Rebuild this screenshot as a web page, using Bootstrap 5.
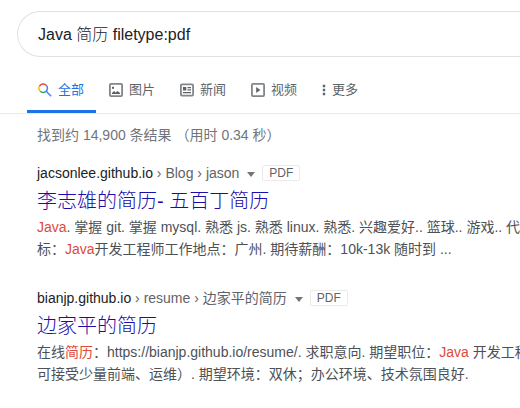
<!DOCTYPE html>
<html lang="zh-CN">
<head>
<meta charset="utf-8">
<meta name="viewport" content="width=device-width, initial-scale=1">
<title>Java 简历 filetype:pdf</title>
<link href="https://cdn.jsdelivr.net/npm/bootstrap@5.3.0/dist/css/bootstrap.min.css" rel="stylesheet">
<style>
body { font-family: "Liberation Sans", "Noto Sans CJK SC", sans-serif; font-size: 14px; line-height: 22px; color: #4d5156; background: #fff; }
.search-form { padding: 11px 0 0 17px; }
.search-box { height: 46px; padding: 0 20px 2px; border: 1px solid #dfe1e5; border-right: 0; border-radius: 24px 0 0 24px; font-size: 16px; font-weight: 300; color: #202124; }
.search-box:focus { box-shadow: none; border-color: #dfe1e5; color: #202124; }
.tab-bar { padding: 10px 0 0 27px; border-bottom: 1px solid #ebebeb; gap: 2px; }
.tab-link { height: 46px; padding: 2px 12px 0 11px; gap: 6px; font-size: 13px; color: #5f6368; border-bottom: 3px solid transparent; }
.tab-link.current { color: #1a73e8; border-color: #1a73e8; }
.tab-link svg { width: 14px; height: 14px; }
.tab-link .dots { width: 4px; }
.results { padding: 10px 0 0 37px; }
.stats { color: #70757a; margin-bottom: 16px; }
.result { margin-bottom: 27px; }
.source { color: #5f6368; }
.source .host { color: #202124; }
.result-menu { width: 8px; height: 5px; margin: 2px 7px 0 8px; color: #70757a; }
.file-type { padding: 0 6px; height: 16px; line-height: 14px; font-size: 12px; border: 1px solid #ebebeb; border-radius: 2px; color: #5f6368; }
.result-title { font-size: 20px; line-height: 30px; font-weight: 300; padding-top: 2px; }
.result-title a { color: #1a0dab; }
.snippet em { color: #dd4b39; }
</style>
<script src="https://cdn.jsdelivr.net/npm/bootstrap@5.3.0/dist/js/bootstrap.bundle.min.js"></script>
</head>
<body class="overflow-hidden">
<form class="search-form" role="search">
  <input class="form-control search-box" type="text" aria-label="搜索" value="Java 简历 filetype:pdf">
</form>
<nav class="tab-bar d-flex text-nowrap" aria-label="搜索类型">
  <a class="tab-link current d-flex align-items-center text-decoration-none" href="#" aria-current="page">
    <svg viewBox="0 0 14 14" fill="none" stroke-width="1.5" aria-hidden="true"><path d="M1.4 3.3A4.2 4.2 0 0 1 8.2 2.2" stroke="#ea4335"/><path d="M1.4 3.3A4.2 4.2 0 0 0 2.2 8.2" stroke="#fbbc05"/><path d="M2.2 8.2A4.2 4.2 0 0 0 8.2 8.2" stroke="#34a853"/><path d="M8.2 2.2A4.2 4.2 0 0 1 8.2 8.2L13.2 13.2" stroke="#4285f4"/></svg>全部</a>
  <a class="tab-link d-flex align-items-center text-decoration-none" href="#">
    <svg viewBox="0 0 14 14" aria-hidden="true"><rect x=".9" y=".9" width="12.2" height="12.2" rx="1" fill="none" stroke="#80868b" stroke-width="1.8"/><path d="M3 11V10l2-2 1.7 1.5L8.5 8 11 10v1z" fill="#5f6368"/><rect x="3" y="3.8" width="2" height="2" fill="#5f6368"/></svg>图片</a>
  <a class="tab-link d-flex align-items-center text-decoration-none" href="#">
    <svg viewBox="0 0 14 14" aria-hidden="true"><rect x=".9" y="1.4" width="12.2" height="11.2" rx="1" fill="none" stroke="#80868b" stroke-width="1.8"/><path d="M3 4h3.3v3.5H3zM7.5 4H11v1.2H7.5zM7.5 6.3H11v1.2H7.5zM3 9h8v1.3H3z" fill="#5f6368"/></svg>新闻</a>
  <a class="tab-link d-flex align-items-center text-decoration-none" href="#">
    <svg viewBox="0 0 14 14" aria-hidden="true"><rect x=".9" y=".9" width="12.2" height="12.2" rx="1" fill="none" stroke="#80868b" stroke-width="1.8"/><path d="M5.2 4v6l4.2-3z" fill="#5f6368"/></svg>视频</a>
  <a class="tab-link d-flex align-items-center text-decoration-none" href="#">
    <svg class="dots" viewBox="0 0 4 14" fill="#5f6368" aria-hidden="true"><path d="M.8 1.8h2.4v2.4H.8zM.8 5.8h2.4v2.4H.8zM.8 9.8h2.4v2.4H.8z"/></svg>更多</a>
</nav>
<main class="results text-nowrap">
  <div class="stats">找到约 14,900 条结果 （用时 0.34 秒）</div>
  <article class="result">
    <div class="source d-flex align-items-center">
      <cite class="fst-normal"><span class="host">jacsonlee.github.io</span> › Blog › jason</cite>
      <button class="result-menu btn p-0 border-0 d-flex" type="button" aria-label="更多选项"><svg width="8" height="5" viewBox="0 0 8 5" fill="currentColor"><path d="M0 0h8L4 5z"/></svg></button>
      <span class="file-type">PDF</span>
    </div>
    <h3 class="result-title mb-0"><a class="text-decoration-none" href="#">李志雄的简历- 五百丁简历</a></h3>
    <div class="snippet"><em class="fst-normal">Java</em>. 掌握 git. 掌握 mysql. 熟悉 js. 熟悉 linux. 熟悉. 兴趣爱好.. 篮球.. 游戏.. 代<br>标：<em class="fst-normal">Java</em>开发工程师工作地点：广州. 期待薪酬：10k-13k 随时到 ...</div>
  </article>
  <article class="result">
    <div class="source d-flex align-items-center">
      <cite class="fst-normal"><span class="host">bianjp.github.io</span> › resume › 边家平的简历</cite>
      <button class="result-menu btn p-0 border-0 d-flex" type="button" aria-label="更多选项"><svg width="8" height="5" viewBox="0 0 8 5" fill="currentColor"><path d="M0 0h8L4 5z"/></svg></button>
      <span class="file-type">PDF</span>
    </div>
    <h3 class="result-title mb-0"><a class="text-decoration-none" href="#">边家平的简历</a></h3>
    <div class="snippet">在线<em class="fst-normal">简历</em>：https://bianjp.github.io/resume/. 求职意向. 期望职位：<em class="fst-normal">Java</em> 开发工程<br>可接受少量前端、运维）. 期望环境：双休；办公环境、技术氛围良好.</div>
  </article>
</main>
</body>
</html>
